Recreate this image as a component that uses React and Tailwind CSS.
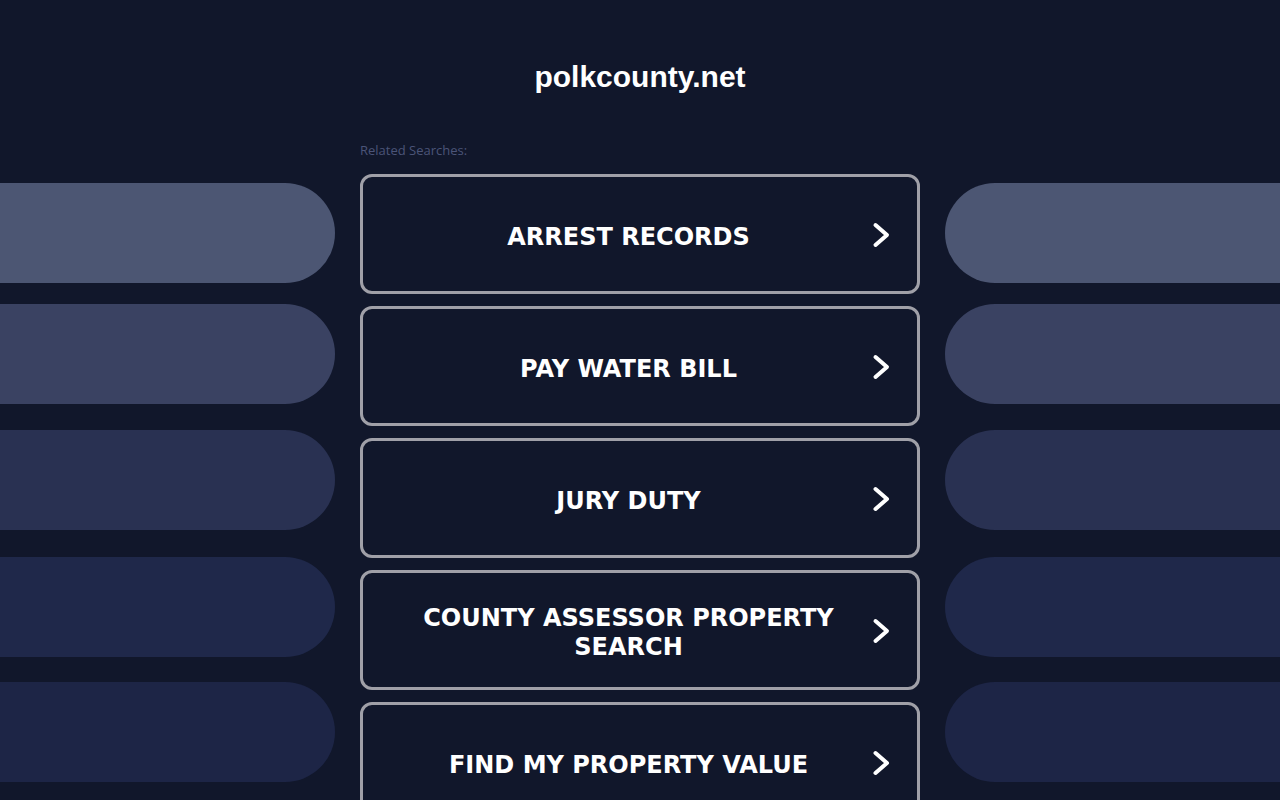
import React from 'react';

const searches = [
  'ARREST RECORDS',
  'PAY WATER BILL',
  'JURY DUTY',
  'COUNTY ASSESSOR PROPERTY SEARCH',
  'FIND MY PROPERTY VALUE',
];

const pills = [
  { color: 'bg-[#4c5673]', mt: 'mt-[40px]' },
  { color: 'bg-[#3a4262]', mt: 'mt-[21px]' },
  { color: 'bg-[#293152]', mt: 'mt-[26px]' },
  { color: 'bg-[#1f284a]', mt: 'mt-[27px]' },
  { color: 'bg-[#1d2546]', mt: 'mt-[25px]' },
];

function Chevron() {
  return (
    <svg width="24" height="28" viewBox="0 0 24 28" fill="none" className="shrink-0">
      <path d="M5.5 4 L17 14 L5.5 24" stroke="white" strokeWidth="4" strokeLinecap="round" strokeLinejoin="round" />
    </svg>
  );
}

function PillColumn({ side }) {
  return (
    <div className="flex flex-col">
      {pills.map((p, i) => (
        <div
          key={i}
          className={`${p.mt} ${p.color} h-[100px] ${side === 'left' ? 'rounded-r-[50px]' : 'rounded-l-[50px]'}`}
        />
      ))}
    </div>
  );
}

export default function App() {
  return (
    <div className="min-h-screen bg-[#11172b] overflow-hidden" style={{ height: 800 }}>
      <h1 className="pt-[59px] text-center text-white text-[30px] leading-[36px] font-bold font-['Liberation_Sans',Arial,sans-serif]">
        polkcounty.net
      </h1>

      <div className="mt-[48px] grid grid-cols-[1fr_560px_1fr] gap-x-[25px]">
        <PillColumn side="left" />

        <div className="flex flex-col">
          <p className="text-[13px] leading-[15px] text-[#4b5478] font-['Open_Sans','Noto_Sans',sans-serif]">
            Related Searches:
          </p>
          <div className="mt-[16px] flex flex-col gap-[12px]">
            {searches.map((s) => (
              <a
                key={s}
                href="#"
                className="h-[120px] rounded-[12px] border-[3px] border-[#a0a0a8] bg-[#11172b] flex items-center pl-[24px] pr-[23px] pt-[2px]"
              >
                <span className="flex-1 pt-[4px] text-center text-white font-bold text-[24px] leading-[29px] font-['DejaVu_Sans',Verdana,Tahoma,sans-serif]">
                  {s}
                </span>
                <Chevron />
              </a>
            ))}
          </div>
        </div>

        <PillColumn side="right" />
      </div>
    </div>
  );
}
